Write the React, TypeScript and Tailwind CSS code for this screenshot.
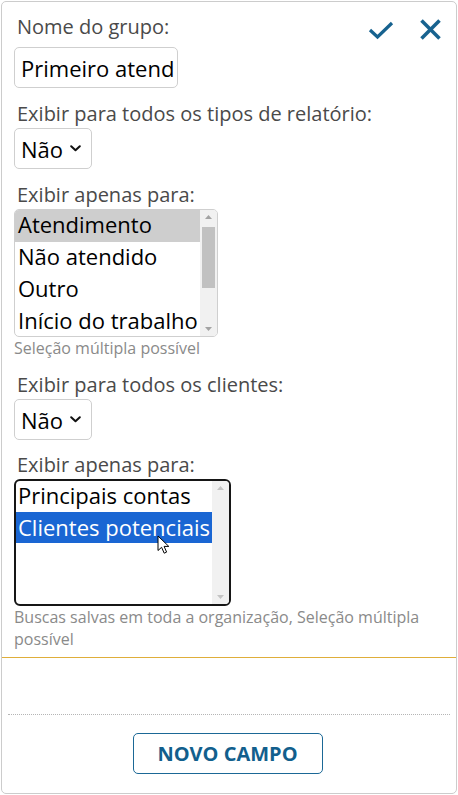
import React from "react";

const font = { fontFamily: '"Open Sans", "Noto Sans", sans-serif' };

function Chevron() {
  return (
    <svg width="11" height="7" viewBox="0 0 11 7" className="ml-[7px]">
      <polyline points="1.2,1.2 5.5,5.3 9.8,1.2" fill="none" stroke="#111" strokeWidth="2" strokeLinecap="round" strokeLinejoin="round" />
    </svg>
  );
}

function SelectBox() {
  return (
    <div className="flex h-[41px] w-[78px] items-center rounded-[5px] border border-[#cfcfcf] bg-white pl-[6px] text-[22px] leading-[30px] text-black">
      <span>Não</span>
      <Chevron />
    </div>
  );
}

function Label({ children }: { children: React.ReactNode }) {
  return <div className="pl-[3px] text-[20px] leading-[28px] text-[#4a4a4a]">{children}</div>;
}

function ScrollArrows({ color, thumb }: { color: string; thumb: boolean }) {
  return (
    <div className="relative h-full w-[17px] bg-[#f1f1f1]">
      <svg width="17" height="14" viewBox="0 0 17 14" className="absolute left-0 top-0">
        <polygon points="5,9 12,9 8.5,5" fill={color} />
      </svg>
      {thumb && <div className="absolute left-[2px] top-[17px] h-[61px] w-[13px] bg-[#c1c1c1]" />}
      <svg width="17" height="14" viewBox="0 0 17 14" className="absolute bottom-0 left-0">
        <polygon points="5,5 12,5 8.5,9" fill={color} />
      </svg>
    </div>
  );
}

export default function App() {
  return (
    <div className="h-[795px] w-[458px] bg-white p-px" style={font}>
      <div className="relative flex h-[793px] w-[456px] flex-col rounded-[5px] border border-[#cccccc] bg-white">
        <div className="border-b border-[#dfae3a] px-3 pb-[7px] pt-[11px]">
          <div className="flex items-start justify-between">
            <Label>Nome do grupo:</Label>
            <div className="mr-[3px] mt-[6px] flex items-center gap-[26px]">
              <svg width="26" height="20" viewBox="0 0 26 20">
                <polyline points="2,10 9.5,17 24,3" fill="none" stroke="#17628f" strokeWidth="3.2" />
              </svg>
              <svg width="21" height="21" viewBox="0 0 21 21">
                <line x1="1.5" y1="1.5" x2="19.5" y2="19.5" stroke="#17628f" strokeWidth="3.6" />
                <line x1="19.5" y1="1.5" x2="1.5" y2="19.5" stroke="#17628f" strokeWidth="3.6" />
              </svg>
            </div>
          </div>
          <div className="mt-[6px] flex h-[41px] w-[164px] items-center overflow-hidden rounded-[5px] border border-[#cfcfcf] bg-white pl-[6px]">
            <input
              readOnly
              value="Primeiro atend"
              className="w-full bg-transparent text-[22px] leading-[30px] text-black outline-none"
            />
          </div>

          <div className="mt-3">
            <Label>Exibir para todos os tipos de relatório:</Label>
          </div>
          <SelectBox />

          <div className="mt-3">
            <Label>Exibir apenas para:</Label>
          </div>
          <div className="flex h-[128px] w-[204px] overflow-hidden rounded-[5px] border border-[#cfcfcf] bg-white">
            <div className="min-w-0 flex-1 text-[22px] leading-[29px] text-black">
              <div className="h-[32px] whitespace-nowrap bg-[#cecece] pl-[3px]">Atendimento</div>
              <div className="h-[32px] whitespace-nowrap pl-[3px]">Não atendido</div>
              <div className="h-[32px] whitespace-nowrap pl-[3px]">Outro</div>
              <div className="h-[32px] whitespace-nowrap pl-[3px]">Início do trabalho</div>
            </div>
            <ScrollArrows color="#a3a3a3" thumb />
          </div>
          <div className="text-[16px] leading-[22px] text-[#8a8a8a]">Seleção múltipla possível</div>

          <div className="mt-3">
            <Label>Exibir para todos os clientes:</Label>
          </div>
          <SelectBox />

          <div className="mt-[11px]">
            <Label>Exibir apenas para:</Label>
          </div>
          <div className="flex h-[127px] w-[217px] overflow-hidden rounded-[6px] border-2 border-[#161616] bg-white">
            <div className="min-w-0 flex-1 text-[22px] leading-[28px]">
              <div className="h-[31px] whitespace-nowrap pl-[2px] text-black">Principais contas</div>
              <div className="h-[31px] whitespace-nowrap bg-[#1a66d3] pl-[2px] leading-[31px] text-white">Clientes potenciais</div>
            </div>
            <ScrollArrows color="#c4c4c4" thumb={false} />
          </div>
          <div className="text-[16px] leading-[22px] text-[#8a8a8a]">
            Buscas salvas em toda a organização, Seleção múltipla possível
          </div>
        </div>

        <div className="mx-[6px] mt-[56px] border-t border-dotted border-[#b5b5b5]" />

        <div className="mt-[18px] flex justify-center">
          <button className="ml-[-3px] flex h-[41px] w-[190px] items-center justify-center rounded-[5px] border border-[#1b6896] bg-white text-[20px] font-bold text-[#125f8d]">
            NOVO CAMPO
          </button>
        </div>

        <svg
          width="14"
          height="20"
          viewBox="0 0 14 20"
          className="absolute left-[155px] top-[533px]"
        >
          <path
            d="M1 1 L1 15.5 L4.6 12.3 L7.2 18.2 L9.6 17.1 L7.1 11.4 L11.8 11.4 Z"
            fill="#fff"
            stroke="#000"
            strokeWidth="1"
            strokeLinejoin="round"
          />
        </svg>
      </div>
    </div>
  );
}
